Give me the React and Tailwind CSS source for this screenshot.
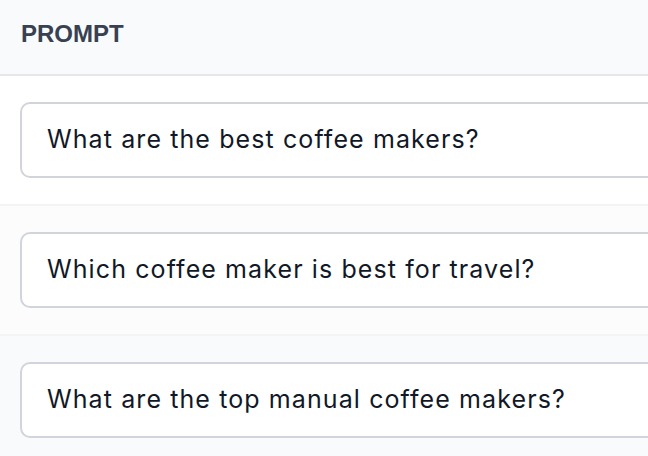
export default function App() {
  const rows = [
    { text: "What are the best coffee makers?", bg: "bg-white" },
    { text: "Which coffee maker is best for travel?", bg: "bg-[#fcfcfd]" },
    { text: "What are the top manual coffee makers?", bg: "bg-[#f9fafb]" },
  ];
  return (
    <div className="w-[648px] h-[456px] overflow-hidden bg-white">
      <div className="h-[76px] bg-[#f9fafb] border-b-2 border-[#e5e7eb] flex items-center pl-[21px] pb-[6px]">
        <span className="text-[24px] font-semibold text-[#374151]" style={{ fontFamily: '"Liberation Sans", Arial, sans-serif' }}>
          PROMPT
        </span>
      </div>
      {rows.map((r, i) => (
        <div key={i} className={`${r.bg} h-[130px] border-b-2 border-[#f3f4f6] pl-[20px] pt-[26px]`}>
          <div className="w-[700px] h-[76px] bg-white border-2 border-[#d1d5db] rounded-[10px] flex items-center pl-[25px]">
            <span className="text-[25px] tracking-[1.1px] text-[#111827]" style={{ fontFamily: 'Inter, "Noto Sans", sans-serif' }}>
              {r.text}
            </span>
          </div>
        </div>
      ))}
    </div>
  );
}
